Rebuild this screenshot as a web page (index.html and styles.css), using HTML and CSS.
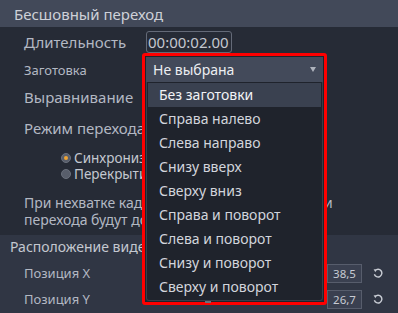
FILE: index.html
```html
<!DOCTYPE html>
<html lang="ru">
<head>
    <meta charset="UTF-8">
    <meta name="viewport" content="width=device-width, initial-scale=1.0">
    <title>Бесшовный переход</title>
    <link rel="stylesheet" href="styles.css">
</head>
<body>
    <div class="app">
        <div class="panel">
            <div class="panel-title">Бесшовный переход</div>

            <div class="row row-duration">
                <span class="label label-lg">Длительность</span>
                <span class="time-field">00:00:02.00</span>
            </div>
            <div class="row row-preset">
                <span class="label">Заготовка</span>
            </div>
            <div class="row row-align">
                <span class="label label-lg">Выравнивание</span>
            </div>
            <div class="row row-mode">
                <span class="label label-lg">Режим перехода</span>
            </div>

            <div class="radios">
                <div class="radio"><span class="radio-dot checked"></span>Синхронизация</div>
                <div class="radio"><span class="radio-dot"></span>Перекрытие</div>
            </div>

            <p class="note">При нехватке кадров все недостающие части<br>перехода будут дополнены</p>
        </div>

        <div class="section">
            <div class="section-title">Расположение видео</div>
            <div class="prop-row">
                <span class="label">Позиция X</span>
                <span class="value">38,5</span>
                <svg class="reset" viewBox="0 0 10 10" width="10" height="10">
                    <path d="M2.2 2.6 A3.8 3.8 0 1 1 1.4 6.2" fill="none" stroke="#c9cdd5" stroke-width="1.4"/>
                    <path d="M0.6 1.2 L3.6 1.4 L2.4 4.2 Z" fill="#c9cdd5"/>
                </svg>
            </div>
            <div class="prop-row">
                <span class="label">Позиция Y</span>
                <span class="value">26,7</span>
                <svg class="reset" viewBox="0 0 10 10" width="10" height="10">
                    <path d="M2.2 2.6 A3.8 3.8 0 1 1 1.4 6.2" fill="none" stroke="#c9cdd5" stroke-width="1.4"/>
                    <path d="M0.6 1.2 L3.6 1.4 L2.4 4.2 Z" fill="#c9cdd5"/>
                </svg>
            </div>
        </div>

        <!-- open preset dropdown, highlighted -->
        <div class="dropdown">
            <div class="select-head">
                <span>Не выбрана</span>
                <span class="arrow"></span>
            </div>
            <ul class="options">
                <li class="active">Без заготовки</li>
                <li>Справа налево</li>
                <li>Слева направо</li>
                <li>Снизу вверх</li>
                <li>Сверху вниз</li>
                <li>Справа и поворот</li>
                <li>Слева и поворот</li>
                <li>Снизу и поворот</li>
                <li>Сверху и поворот</li>
            </ul>
            <span class="thumb"></span>
        </div>
    </div>
</body>
</html>
```

FILE: styles.css
```css
:root {
    --panel-bg: #262b36;
    --title-bg: #424959;
    --section-bg: #303644;
    --label-color: #b3b8c3;
    --text-color: #d3d6dd;
    --list-bg: #1f232c;
}

* {
    margin: 0;
    padding: 0;
    box-sizing: border-box;
}

body {
    font-family: 'Noto Sans', 'DejaVu Sans', sans-serif;
    background-color: var(--panel-bg);
    color: var(--text-color);
    width: 398px;
    height: 313px;
    overflow: hidden;
}

.app {
    position: relative;
    width: 398px;
    height: 313px;
}

.panel {
    height: 235px;
    background-color: var(--panel-bg);
}

.panel-title {
    height: 27px;
    line-height: 28px;
    padding-left: 14px;
    font-size: 15px;
    color: #ced1d8;
    background-color: var(--title-bg);
}

.row {
    display: flex;
    align-items: center;
    padding-left: 24px;
}

.label {
    font-size: 13px;
    color: var(--label-color);
}

.label-lg {
    font-size: 15px;
}

.row-duration {
    height: 29px;
}

.row-duration .label {
    width: 122px;
}

.time-field {
    width: 86px;
    height: 22px;
    line-height: 20px;
    font-size: 15px;
    color: #c3c7cf;
    border: 1px solid #646a78;
    border-radius: 3px;
    padding-left: 1px;
    white-space: nowrap;
    overflow: hidden;
}

.row-preset {
    height: 27px;
}

.row-align {
    height: 27px;
}

.row-mode {
    height: 36px;
}

.radios {
    padding: 4px 0 0 61px;
}

.radio {
    display: flex;
    align-items: center;
    height: 16px;
    font-size: 13.5px;
    color: #c4c8d0;
}

.radio-dot {
    width: 10px;
    height: 10px;
    border-radius: 50%;
    background-color: #585e6b;
    border: 1px solid #6a707c;
    margin-right: 3px;
    position: relative;
}

.radio-dot.checked::after {
    content: "";
    position: absolute;
    top: 2px;
    left: 2px;
    width: 4px;
    height: 4px;
    border-radius: 50%;
    background-color: #f0a534;
}

.note {
    margin-top: 12px;
    padding-left: 24px;
    font-size: 14px;
    line-height: 17px;
    color: var(--label-color);
    white-space: nowrap;
}

.section {
    height: 78px;
    background-color: var(--section-bg);
}

.section-title {
    height: 23px;
    line-height: 23px;
    padding-left: 10px;
    font-size: 14px;
    color: #c4c8d0;
}

.section-title + .prop-row {
    margin-top: 2px;
}

.prop-row {
    display: flex;
    align-items: center;
    height: 26px;
    padding: 0 15px 0 24px;
}

.prop-row .label {
    flex: 1;
}

.value {
    width: 35px;
    height: 19px;
    line-height: 17px;
    font-size: 11.5px;
    text-align: center;
    color: #c7cbd3;
    background-color: #3a4050;
    border: 1px solid #575d6c;
    margin-right: 11px;
}

.reset {
    display: block;
}

/* dropdown overlay */
.dropdown {
    position: absolute;
    left: 142px;
    top: 53px;
    width: 185px;
    height: 252px;
    border: 3px solid #ff0000;
    border-radius: 3px;
    background-color: var(--list-bg);
}

.select-head {
    display: flex;
    align-items: center;
    justify-content: space-between;
    height: 25px;
    margin: 1px 1px 0;
    padding: 0 7px;
    background-color: #434a5a;
    font-size: 14px;
    color: #eceef2;
}

.arrow {
    width: 0;
    height: 0;
    border-left: 3.5px solid transparent;
    border-right: 3.5px solid transparent;
    border-top: 5px solid #aeb3bd;
}

.options {
    list-style: none;
    margin: 0 1px;
    padding: 1px 1px 0;
    height: 219px;
    border: 1px solid #3a3f4a;
    border-top: none;
    border-radius: 0 0 3px 3px;
}

.options li {
    height: 24px;
    line-height: 24px;
    padding-left: 11px;
    font-size: 14px;
    color: #d2d5dc;
}

.options li.active {
    background-color: #3a4150;
    color: #f2f3f6;
}

.thumb {
    position: absolute;
    left: 60px;
    bottom: -1px;
    width: 6px;
    height: 2px;
    background-color: #6c717c;
}
```
